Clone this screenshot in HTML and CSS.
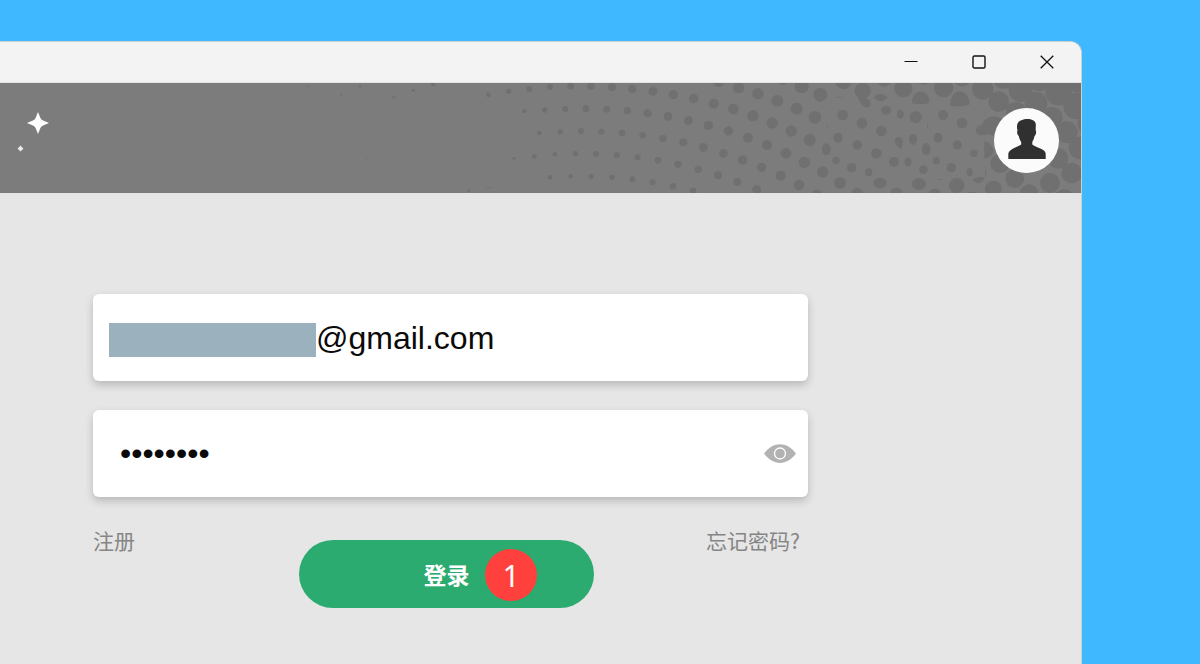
FILE: index.html
```html
<!DOCTYPE html>
<html lang="zh-CN">
<head>
<meta charset="utf-8">
<title>登录</title>
<link rel="stylesheet" href="styles.css">
</head>
<body>
<div class="window">
  <div class="titlebar">
    <button class="win-btn" type="button" aria-label="最小化"><svg width="14" height="14" viewBox="0 0 14 14"><path d="M.5 6.500h13" stroke="#111" stroke-width="1.200"/></svg></button>
    <button class="win-btn" type="button" aria-label="最大化"><svg width="14" height="14" viewBox="0 0 14 14"><rect x="1" y="1" width="12" height="12" rx="1.3" fill="none" stroke="#111" stroke-width="1.4"/></svg></button>
    <button class="win-btn" type="button" aria-label="关闭"><svg width="14" height="14" viewBox="0 0 14 14"><path d="M.7.7l12.6 12.6M13.3.7L.7 13.3" stroke="#111" stroke-width="1.3"/></svg></button>
  </div>
  <header class="banner">
    <svg class="dots" width="800" height="110" viewBox="843 249 2400 330" fill="#707070" aria-hidden="true">
      <g transform="translate(900 240)">
        <circle cx="24" cy="18" r="3"/><circle cx="123" cy="44" r="3"/><circle cx="180" cy="19" r="4"/><circle cx="281" cy="51" r="4"/><circle cx="340" cy="31" r="5"/><circle cx="399" cy="13" r="6"/>
        <circle cx="565" cy="44" r="7"/><circle cx="626" cy="34" r="8"/><circle cx="688" cy="27" r="9"/><circle cx="750" cy="21" r="9"/><circle cx="812" cy="19" r="10"/><circle cx="873" cy="19" r="11"/>
        <circle cx="673" cy="94" r="6"/><circle cx="734" cy="90" r="8"/><circle cx="796" cy="87" r="9"/><circle cx="858" cy="86" r="10"/>
        <circle cx="718" cy="159" r="7"/><circle cx="781" cy="155" r="8"/><circle cx="843" cy="153" r="9"/>
        <circle cx="642" cy="235" r="5"/><circle cx="703" cy="229" r="7"/><circle cx="765" cy="223" r="7"/><circle cx="827" cy="221" r="8"/><circle cx="888" cy="222" r="9"/>
        <circle cx="750" cy="292" r="7"/><circle cx="812" cy="289" r="7"/><circle cx="873" cy="289" r="8"/><circle cx="506" cy="333" r="4"/><path d="M560 321h12v3h-12z"/><circle cx="200" cy="236" r="2"/>
      </g>
      <g transform="translate(1800 240)">
        <circle cx="36" cy="21" r="12"/><circle cx="97" cy="27" r="12"/><circle cx="159" cy="34" r="13"/><circle cx="220" cy="44" r="14"/><circle cx="281" cy="56" r="14"/><circle cx="341" cy="71" r="15"/><circle cx="400" cy="87" r="16"/><circle cx="459" cy="107" r="17"/><circle cx="517" cy="129" r="17"/><circle cx="574" cy="153" r="17"/><circle cx="629" cy="180" r="18"/><ellipse cx="679" cy="208" rx="13" ry="18"/>
        <circle cx="20" cy="88" r="10"/><circle cx="82" cy="92" r="11"/><circle cx="143" cy="100" r="12"/><circle cx="204" cy="109" r="13"/><circle cx="265" cy="122" r="13"/><circle cx="325" cy="136" r="14"/><circle cx="385" cy="153" r="14"/><circle cx="444" cy="173" r="15"/><circle cx="501" cy="195" r="15"/><circle cx="558" cy="220" r="16"/><circle cx="613" cy="247" r="17"/><circle cx="668" cy="276" r="17"/><circle cx="720" cy="309" r="17"/>
        <circle cx="4" cy="155" r="9"/><circle cx="66" cy="159" r="10"/><circle cx="128" cy="166" r="10"/><circle cx="189" cy="175" r="11"/><circle cx="250" cy="187" r="12"/><circle cx="310" cy="202" r="13"/><circle cx="370" cy="220" r="13"/><circle cx="428" cy="240" r="14"/><circle cx="485" cy="262" r="14"/><circle cx="542" cy="287" r="15"/><circle cx="597" cy="315" r="16"/><circle cx="651" cy="346" r="17"/>
        <circle cx="51" cy="226" r="9"/><circle cx="113" cy="232" r="9"/><circle cx="174" cy="241" r="10"/><circle cx="234" cy="253" r="11"/><circle cx="295" cy="268" r="11"/><circle cx="354" cy="286" r="12"/><circle cx="412" cy="306" r="12"/><circle cx="470" cy="329" r="13"/>
        <circle cx="36" cy="292" r="8"/><circle cx="97" cy="298" r="9"/><circle cx="158" cy="307" r="9"/><circle cx="219" cy="319" r="10"/><circle cx="279" cy="333" r="10"/>
        <circle cx="356" cy="5" r="16"/><circle cx="416" cy="23" r="17"/><circle cx="474" cy="41" r="17"/><circle cx="532" cy="62" r="18"/><circle cx="590" cy="86" r="18"/><circle cx="645" cy="112" r="19"/><circle cx="548" cy="-3" r="18"/><circle cx="605" cy="19" r="21"/><circle cx="661" cy="44" r="21"/><path d="M705 52q12-3 24 0-12 3-24 0zM682 130l2 10-2 10-1-10z"/>
        <ellipse cx="714" cy="173" rx="13" ry="15"/><circle cx="708" cy="241" r="11"/>
      </g>
      <g transform="translate(2520 90)">
        <circle cx="10" cy="153" r="24"/><circle cx="68" cy="182" r="24"/><path d="M54 202q18-4 34 8 8 14-2 22-16 2-24-13zM101 202q20-20 42 0-20 24-42 0z"/>
        <circle cx="132" cy="148" r="22"/><circle cx="190" cy="175" r="27"/><path d="M216 216c2-42 49-42 53 0q-14 11-53 4zM331 219c4-48 54-48 59 4q-20 10-59 4z"/><circle cx="250" cy="136" r="28"/><circle cx="311" cy="173" r="29"/><circle cx="428" cy="177" r="32"/><circle cx="366" cy="145" r="25"/>
        <circle cx="8" cy="255" r="16"/><circle cx="66" cy="280" r="16"/><circle cx="124" cy="303" r="16"/><ellipse cx="138" cy="241" rx="15" ry="13"/><ellipse cx="181" cy="253" rx="10" ry="13"/><circle cx="227" cy="262" r="18"/><circle cx="309" cy="255" r="15"/><circle cx="366" cy="279" r="16"/>
        <circle cx="-6" cy="322" r="13"/><circle cx="52" cy="345" r="14"/><circle cx="109" cy="370" r="16"/><circle cx="162" cy="396" r="15"/><path d="M165 336q-2-13 10-15 16 2 13 15l-3 22q-15-6-20-22z"/><ellipse cx="219" cy="328" rx="12" ry="16"/><ellipse cx="259" cy="357" rx="13" ry="18"/><ellipse cx="294" cy="323" rx="13" ry="15"/><circle cx="352" cy="345" r="14"/><circle cx="402" cy="370" r="11"/><path d="M262 280l2 10-2 10-1-10zM291 448q9-3 18 0-9 3-18 0z"/>
        <circle cx="35" cy="413" r="14"/><ellipse cx="86" cy="427" rx="11" ry="12"/><ellipse cx="204" cy="396" rx="11" ry="14"/><circle cx="250" cy="419" r="13"/><circle cx="289" cy="392" r="11"/><circle cx="334" cy="413" r="14"/><ellipse cx="389" cy="427" rx="9" ry="12"/>
        <ellipse cx="120" cy="459" rx="20" ry="16"/><ellipse cx="237" cy="462" rx="21" ry="18"/><circle cx="350" cy="467" r="23"/><circle cx="0" cy="459" r="17"/><circle cx="52" cy="490" r="17"/><circle cx="169" cy="492" r="19"/><circle cx="285" cy="495" r="19"/><circle cx="397" cy="508" r="23"/>
        <path d="M407 300q4-14 18-15 10-24 37-26 31 2 35 38l-17 25-38-9q-33 10-35-13zM433 334q24 6 29 29-4 17-29 24zM396 451q16-14 38-8-6 18-22 17-8-7-16-9zM435 414l4 14-4 18zM436 234l2 12-2 12z"/>
        <circle cx="476" cy="215" r="31"/><circle cx="490" cy="146" r="31"/><circle cx="542" cy="180" r="36"/><circle cx="588" cy="220" r="34"/><circle cx="598" cy="146" r="37"/><circle cx="656" cy="186" r="40"/><circle cx="712" cy="146" r="42"/><circle cx="710" cy="228" r="40"/><circle cx="636" cy="263" r="32"/><circle cx="680" cy="307" r="33"/><circle cx="720" cy="354" r="34"/><circle cx="654" cy="385" r="31"/><circle cx="695" cy="429" r="31"/><circle cx="630" cy="459" r="30"/><circle cx="672" cy="506" r="29"/><circle cx="524" cy="446" r="28"/><circle cx="480" cy="400" r="29"/><circle cx="460" cy="477" r="25"/><circle cx="567" cy="490" r="27"/><circle cx="618" cy="340" r="31"/><circle cx="528" cy="245" r="30"/><circle cx="740" cy="282" r="28"/>
      </g>
    </svg>
    <svg class="stars" width="32" height="42" viewBox="0 0 32 42" fill="#fff" aria-hidden="true">
      <path d="M21 0l2.400 6q.8 1.900 2.700 2.600L32 11l-5.900 2.400q-1.900.8-2.700 2.600L21 22l-2.400-6q-.8-1.900-2.700-2.600L10 11l5.900-2.400q1.900-.8 2.700-2.600z"/>
      <path d="M3.500 33.500l1.500 1.700 1.500 1.300L5 38l-1.500 1.500L2 38 .5 36.500 2 35.200z" opacity=".85"/>
    </svg>
    <button class="avatar" type="button" aria-label="账户">
      <svg width="38" height="40" viewBox="0 0 38 40" fill="#303030"><path d="M9.500 4.500C11 1.500 15 0 19.500 0c4.200 0 7.500 1.500 8.200 4.500.4 2.300-.3 5 .1 7 .9 2-.2 4.600-1.300 5.500-.4 3-1.500 4.500-2.200 6v2.500c2 1.900 9.200 3.700 11.800 6.300 1.200 1.200 1.600 2.100 1.600 3.500v4.700H.3v-4.700c0-1.400.5-2.300 1.700-3.500 2.600-2.600 8.500-4.400 11.200-6.300V23c-1.100-1.600-2-3.500-2.400-6-1.400-1-2.200-3.800-1.300-5.500-.7-2-.7-5 0-7z"/></svg>
    </button>
  </header>
  <form class="login">
    <label class="field">
      <span class="mask"></span>
      <input class="input" type="text" value="@gmail.com" aria-label="邮箱">
    </label>
    <div class="field field-password">
      <input class="input" type="password" value="password" aria-label="密码">
      <button class="eye" type="button" aria-label="显示密码"><svg width="32" height="20" viewBox="0 0 32 20"><path d="M0 9.500C9-3 23-3 32 9.500 23 22 9 22 0 9.500z" fill="#b2b2b2"/><circle cx="16" cy="9.500" r="5.500" fill="none" stroke="#fff" stroke-width="1.300"/></svg></button>
    </div>
    <div class="actions">
      <a class="link" href="#">注册</a>
      <button class="submit" type="button">登录<span class="badge">1</span></button>
      <a class="link link-end" href="#">忘记密码?</a>
    </div>
  </form>
</div>
</body>
</html>
```
FILE: styles.css
```css
* { box-sizing: border-box; }

body {
  margin: 0;
  min-height: 100vh;
  display: flex;
  background: #40b8ff;
  font-family: "Liberation Sans", "Noto Sans CJK SC", sans-serif;
}

button {
  border: 0;
  padding: 0;
  background: none;
  font-family: inherit;
}

svg { display: block; }

.window {
  flex: 1;
  margin: 41px 118px 0 0;
  border: 1px solid #c9d0d4;
  border-width: 1px 1px 0 0;
  border-radius: 0 12px 0 0;
  background: #e6e6e6;
  overflow: hidden;
}

.titlebar {
  display: flex;
  justify-content: flex-end;
  height: 41px;
  background: #f3f3f3;
  border-bottom: 1px solid #e2e2e2;
}

.win-btn {
  width: 68px;
  display: grid;
  place-items: center;
}

.banner {
  position: relative;
  display: flex;
  justify-content: space-between;
  height: 110px;
  padding: 25px 22px 20px 17px;
  background: #7c7c7c;
  overflow: hidden;
}

.dots {
  position: absolute;
  top: 0;
  right: 0;
}

.stars { margin-top: 4px; }

.avatar {
  position: relative;
  width: 65px;
  height: 65px;
  border-radius: 50%;
  background: #fbfbfb;
  display: grid;
  place-items: center;
  padding-bottom: 4px;
}

.login {
  margin: 101px 273px 0 93px;
  display: grid;
  gap: 29px;
}

.field {
  display: flex;
  align-items: center;
  height: 87px;
  padding: 2px 12px 0 16px;
  border-radius: 6px;
  background: #fff;
  box-shadow: 0 4px 8px rgba(0, 0, 0, 0.2);
}

.field-password { padding: 0 12px 0 27px; }

.mask {
  width: 207px;
  height: 34px;
  margin-top: 2px;
  background: #9bb1bd;
}

.input {
  flex: 1;
  min-width: 0;
  border: 0;
  padding: 0;
  outline: 0;
  background: none;
  color: #0a0a0a;
  font-family: "Liberation Sans", Arial, sans-serif;
  font-size: 32px;
}

.eye {
  width: 32px;
  height: 20px;
}

.actions {
  display: grid;
  grid-template-columns: 1fr 295px 1fr;
  align-items: start;
  margin-right: 8px;
}

.link {
  color: #858585;
  font-family: "Noto Sans CJK SC", sans-serif;
  font-size: 21px;
  line-height: 28px;
  text-decoration: none;
}

.link-end { text-align: right; }

.submit {
  position: relative;
  height: 68px;
  margin-top: 14px;
  border-radius: 34px;
  background: #2bab70;
  color: #fff;
  font-family: "Noto Sans CJK SC", sans-serif;
  font-size: 23px;
  font-weight: 700;
}

.badge {
  position: absolute;
  top: 9px;
  left: 186px;
  width: 52px;
  height: 52px;
  border-radius: 50%;
  background: #ff403c;
  font-family: "Noto Sans", sans-serif;
  font-size: 30px;
  font-weight: 400;
  line-height: 54px;
}
```
